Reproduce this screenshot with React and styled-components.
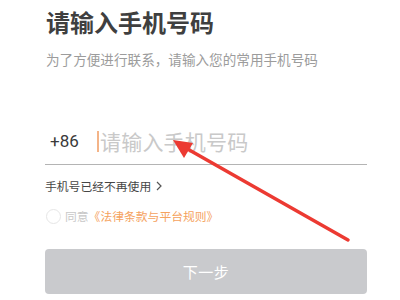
import React from "react";
import styled, { createGlobalStyle } from "styled-components";

const Global = createGlobalStyle`
  html, body {
    margin: 0;
    padding: 0;
    background: #ffffff;
  }
  body {
    width: 400px;
    height: 300px;
    overflow: hidden;
    font-family: "Noto Sans CJK SC", "Noto Sans", sans-serif;
  }
`;

const Page = styled.div`
  position: relative;
  width: 400px;
  height: 300px;
  box-sizing: border-box;
  padding: 0 33px 0 45px;
  display: flex;
  flex-direction: column;
`;

const Title = styled.h1`
  margin: 4px 0 0 1px;
  font-size: 24px;
  line-height: 36px;
  font-weight: 700;
  color: #3f3f3f;
`;

const Subtitle = styled.p`
  margin: 9px 0 0 1px;
  font-size: 13.6px;
  line-height: 20px;
  color: #9c9c9c;
`;

const InputRow = styled.div`
  margin-top: 49px;
  height: 46px;
  display: flex;
  align-items: center;
  border-bottom: 1.5px solid #b4b4b4;
`;

const Prefix = styled.span`
  width: 52px;
  padding-left: 5px;
  box-sizing: border-box;
  font-family: Roboto, "Noto Sans", sans-serif;
  font-size: 17px;
  color: #3a3a3a;
`;

const Caret = styled.span`
  width: 2px;
  height: 21px;
  background: #f4b488;
  margin-right: 1px;
`;

const Placeholder = styled.span`
  font-size: 21px;
  color: #c9c9c9;
  letter-spacing: 0.2px;
`;

const LinkRow = styled.div`
  margin-top: 11px;
  display: flex;
  align-items: center;
  gap: 5px;
  font-size: 11.8px;
  line-height: 20px;
  color: #454545;
`;

const Agree = styled.div`
  margin-top: 10px;
  display: flex;
  align-items: center;
  font-size: 11.8px;
  line-height: 20px;
`;

const Radio = styled.span`
  width: 13px;
  height: 13px;
  border: 1px solid #e6e6e6;
  border-radius: 50%;
  margin: 0 4px 0 1px;
`;

const Muted = styled.span`
  color: #c8c8c8;
`;

const Law = styled.span`
  color: #f5a25e;
`;

const Button = styled.button`
  margin-top: 23px;
  height: 45px;
  width: 100%;
  border: none;
  border-radius: 4px;
  background: #c9cacd;
  color: #ffffff;
  font-family: "Noto Sans CJK SC", sans-serif;
  font-size: 15px;
  letter-spacing: 0.5px;
`;

const ArrowLayer = styled.svg`
  position: absolute;
  left: 0;
  top: 0;
  pointer-events: none;
`;

export default function App() {
  return (
    <>
      <Global />
      <Page>
        <Title>请输入手机号码</Title>
        <Subtitle>为了方便进行联系，请输入您的常用手机号码</Subtitle>
        <InputRow>
          <Prefix>+86</Prefix>
          <Caret />
          <Placeholder>请输入手机号码</Placeholder>
        </InputRow>
        <LinkRow>
          手机号已经不再使用
          <svg width="6" height="10" viewBox="0 0 6 10">
            <path d="M1 1l4 4-4 4" fill="none" stroke="#555" strokeWidth="1.2" />
          </svg>
        </LinkRow>
        <Agree>
          <Radio />
          <Muted>同意</Muted>
          <Law>《法律条款与平台规则》</Law>
        </Agree>
        <Button>下一步</Button>
        <ArrowLayer width="400" height="300" viewBox="0 0 400 300">
          <line x1="348" y1="240" x2="184" y2="147" stroke="#ec3a32" strokeWidth="3.5" strokeLinecap="round" />
          <polygon points="173,140 193,143 184,158" fill="#ec3a32" />
        </ArrowLayer>
      </Page>
    </>
  );
}
